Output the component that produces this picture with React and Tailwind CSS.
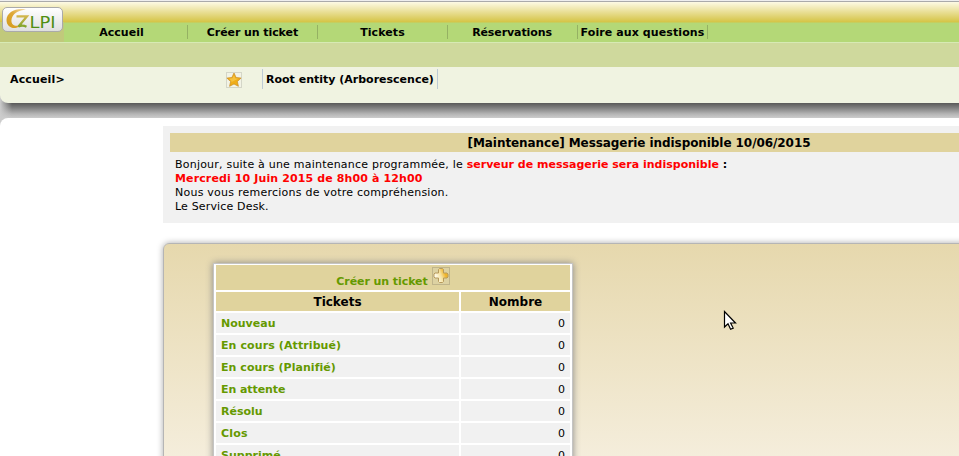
import React from 'react';

const MENU = [
  { label: 'Accueil', style: 'tracking-[0.050px]' },
  { label: 'Créer un ticket', style: 'tracking-[-0.080px]' },
  { label: 'Tickets', style: 'tracking-[0.080px]' },
  { label: 'Réservations', style: 'tracking-[-0.100px]' },
  { label: 'Foire aux questions', style: 'tracking-[0.100px]' },
];

const STATUSES = [
  { label: 'Nouveau', style: 'tracking-[0px]' },
  { label: 'En cours (Attribué)', style: 'tracking-[0.100px]' },
  { label: 'En cours (Planifié)', style: 'tracking-[0.060px]' },
  { label: 'En attente', style: 'tracking-[-0.080px]' },
  { label: 'Résolu', style: 'tracking-[0px]' },
  { label: 'Clos', style: 'tracking-[0.200px]' },
  { label: 'Supprimé', style: 'tracking-[0px]' },
];

function Logo() {
  return (
    <div className="flex h-[25px] w-[61px] items-center rounded-[5px] border border-[#aaa] bg-gradient-to-b from-white to-[#dfdfdf]">
      <svg viewBox="0 0 59 23" className="h-[23px] w-[59px]">
        <defs>
          <linearGradient id="gold" x1="0" x2="1" y1="1" y2="0">
            <stop offset="0" stopColor="#d39a17" />
            <stop offset="0.55" stopColor="#dfa938" />
            <stop offset="1" stopColor="#f7dfae" />
          </linearGradient>
          <linearGradient id="leaf" x1="0" x2="0" y1="0" y2="1">
            <stop offset="0" stopColor="#d2b64c" />
            <stop offset="1" stopColor="#7fa52c" />
          </linearGradient>
        </defs>
        <path d="M23 1.500C13 -0.500 3.500 4.500 3.500 12c0 6 5 9 10 7.800 3-.8 4.500-2.800 5-5.300-2 2.800-4.500 4-7 3-3.500-1.500-3.800-5.500-2-9C11.500 5 15.500 2.500 23 1.500z" fill="url(#gold)" />
        <path d="M13.500 8.300H24l-8.500 10.200c3-1.200 5.500-1 8 .3" fill="none" stroke="url(#leaf)" strokeWidth="2.200" />
        <text x="26.500" y="20" fontSize="15" textLength="26" lengthAdjust="spacingAndGlyphs" fill="#4f8f12" fontFamily="DejaVu Sans">LPI</text>
      </svg>
    </div>
  );
}

function Star() {
  return (
    <svg viewBox="0 0 16 16" className="mt-[5px] size-4 shrink-0">
      <rect x=".5" y=".5" width="15" height="15" fill="#f2f3e6" stroke="#d4d6c8" />
      <path d="M8 1l2.100 4.500 5 .6-3.700 3.400 1 4.800L8 12l-4.400 2.300 1-4.800L.9 6.100l5-.6z" fill="#efad18" stroke="#c98d25" strokeWidth=".7" />
      <path d="M8 3l1.200 3.300 3 .4-7 3.600.4-1.300L3 6.800l3.500-.5z" fill="#f8cb50" opacity=".7" />
    </svg>
  );
}

function Plus() {
  return (
    <svg viewBox="0 0 18 18" className="size-[18px]">
      <defs>
        <linearGradient id="plus" x1="0" x2="1" y1=".7" y2=".3">
          <stop offset="0.100" stopColor="#fffdf0" />
          <stop offset=".5" stopColor="#f6e2a0" />
          <stop offset=".8" stopColor="#efb429" />
        </linearGradient>
      </defs>
      <rect x=".5" y=".5" width="17" height="17" fill="#ddd2a2" stroke="#c0b58b" />
      <path d="M7.500 1.500h3l1 1V6h3.500l1 1v3l-1 1h-3.500v3.500l-1 1h-3l-1-1V11H3l-1-1V7l1-1h3.500V2.500z" fill="url(#plus)" stroke="#b79a5c" strokeLinejoin="round" />
    </svg>
  );
}

function Header() {
  return (
    <header className="relative z-10 h-[103px] overflow-hidden rounded-bl-[8px] bg-[#f0f3e1]">
      <div className="h-px bg-[#eeeeee]" />
      <div className="h-px bg-[#aaaaaa]" />
      <div className="flex h-10 bg-[linear-gradient(#fdfae5_0px,#d5c446_20px,#b4d877_21px,#b4d877_40px)]">
        <div className="w-16 shrink-0 bg-[linear-gradient(transparent_20px,#c1c97b_20px)] pt-[5px] pl-[1.500px]">
          <Logo />
        </div>
        <nav className="flex pt-[23px]">
          {MENU.map((item, i) => (
            <div
              key={item.label}
              className={
                'flex h-[14px] items-center justify-center border-r border-[#95b163] pt-[2px] font-bold whitespace-nowrap ' +
                (i === 0 ? 'w-[124px] pr-[8px] ' : i === 3 ? 'w-[130px] pr-[1px] ' : 'w-[130px] ') +
                item.style
              }
            >
              {item.label}
            </div>
          ))}
        </nav>
      </div>
      <div className="h-px bg-[#d7eab4]" />
      <div className="h-6 bg-[#cfd99d]" />
      <div className="flex h-9 font-bold">
        <div className="w-[226px] pt-[6px] pl-[10px] tracking-[0.150px]">Accueil&gt;</div>
        <Star />
        <div className="mt-[2px] ml-[20px] h-5 w-[176px] border-x border-[#bdcbd5] pt-[4px] pl-[3px] whitespace-nowrap">
          Root entity (Arborescence)
        </div>
      </div>
    </header>
  );
}

function Notice() {
  return (
    <section className="h-[97px] w-[952px] shrink-0 bg-[#f1f1f1] p-[7px]">
      <h2 className="h-[19px] bg-[#e0d39d] text-center text-[12px] leading-[20px] font-bold tracking-[-0.070px]">
        [Maintenance] Messagerie indisponible 10/06/2015
      </h2>
      <div className="px-[5px] pt-[6px]">
        <p>
          <span className="tracking-[0.215px]">Bonjour, suite à une maintenance programmée, le </span>
          <b>
            <span className="text-[#ff0000]">serveur de messagerie sera indisponible</span> :
          </b>
        </p>
        <p className="font-bold tracking-[0.120px] text-[#ff0000]">Mercredi 10 Juin 2015 de 8h00 à 12h00</p>
        <p className="tracking-[0.240px]">Nous vous remercions de votre compréhension.</p>
        <p className="tracking-[0.160px]">Le Service Desk.</p>
      </div>
    </section>
  );
}

function TicketTable() {
  return (
    <div className="grid w-[360px] grid-cols-[243px_109px] gap-[2px] border border-[#c4c4c4] bg-white px-[2px] py-px shadow-[0_0_7px_#888]">
      <div className="col-span-2 flex h-[25px] justify-center gap-1 bg-[#e0d39d] pt-[2px] font-bold text-[#659900]">
        <span className="pt-[8px] tracking-[-0.070px]">Créer un ticket</span>
        <Plus />
      </div>
      <div className="h-[19px] bg-[#e0d39d] text-center text-[12px] leading-[20px] font-bold">Tickets</div>
      <div className="h-[19px] bg-[#e0d39d] text-center text-[12px] leading-[20px] font-bold">Nombre</div>
      {STATUSES.map((s) => (
        <React.Fragment key={s.label}>
          <div className={'h-5 bg-[#f1f1f1] pl-[5px] leading-[22px] font-bold text-[#659900] ' + s.style}>{s.label}</div>
          <div className="h-5 bg-[#f1f1f1] pr-[5px] text-right leading-[22px]">0</div>
        </React.Fragment>
      ))}
    </div>
  );
}

export default function App() {
  return (
    <div className="relative h-[456px] w-[959px] overflow-hidden bg-[#cccccc] font-['DejaVu_Sans',sans-serif] text-[11px] leading-[14px] text-black">
      <div className="h-[118px] bg-[linear-gradient(90deg,#cccccc,transparent_12px),linear-gradient(#cccccc_95px,#595959_103px,#818181_108px,#b5b5b5_114px,#cccccc_118px)]">
        <Header />
      </div>
      <main className="h-[338px] rounded-tl-[8px] bg-white pt-2 pl-[163px]">
        <Notice />
        <section className="mt-5 h-[300px] w-[952px] rounded-[6px] border border-[#b5b5b5] bg-[linear-gradient(#e6d8ad,#f5eedd_220px)] pt-[19px] pl-[49px] shadow-[0_0_6px_#aaa]">
          <TicketTable />
        </section>
      </main>
      <svg viewBox="0 0 14 22" className="absolute top-[310px] left-[723px] h-[22px] w-[14px]">
        <path d="M1.500 1.500v15.500l3.500-3.300 2.600 5.600 2.600-1.200-2.600-5.100h4.900z" fill="white" stroke="black" strokeWidth="1.200" />
      </svg>
    </div>
  );
}
